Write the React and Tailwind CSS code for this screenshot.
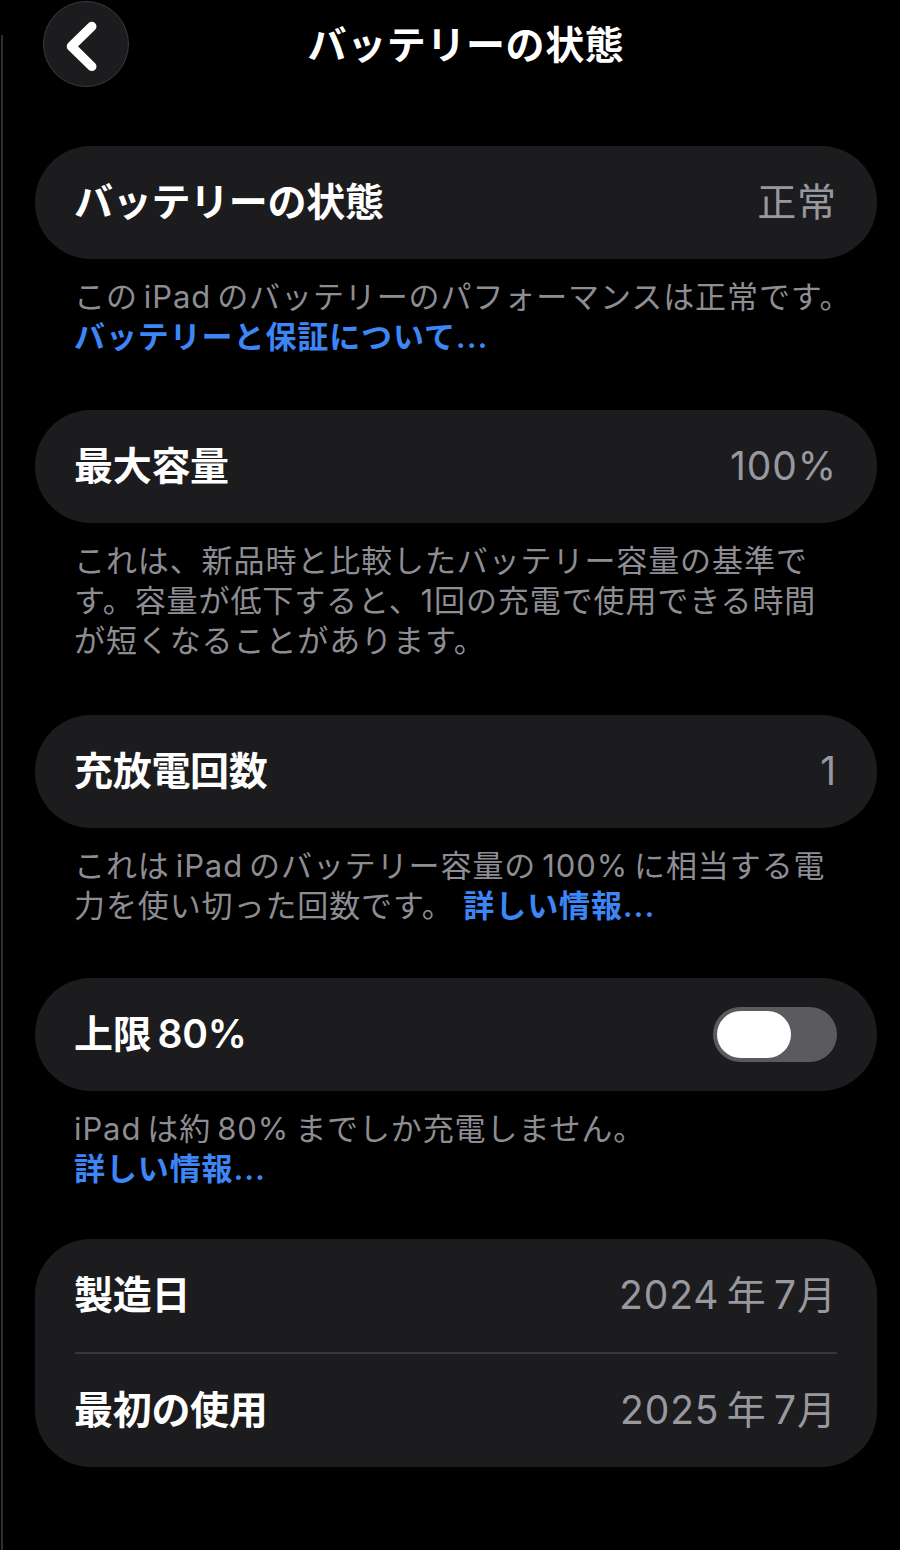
import React, { useState } from 'react';

const font = "font-['Inter','Noto_Sans_CJK_JP',sans-serif]";
const sp = '\u2006'; // narrow gap between latin and kana, like iOS

function Card({ children }) {
    return <div className="bg-[#1c1c1e] rounded-[56px]">{children}</div>;
}

function Row({ label, value, right }) {
    return (
        <div className="h-[113px] flex items-center justify-between pl-[39px] pr-[40px]">
            <span className="text-[39px] font-semibold text-white tracking-[-0.3px]">{label}</span>
            {right ? right : <span className="text-[39px] text-[#98989e] tracking-[0.9px]">{value}</span>}
        </div>
    );
}

function Footer({ children }) {
    return (
        <p className="mt-[18px] pl-[39px] text-[31px] leading-[40px] tracking-[0.9px] text-[#8d8d93] whitespace-nowrap">
            {children}
        </p>
    );
}

function Link({ children }) {
    return <span className="text-[#3d86f5] font-semibold">{children}</span>;
}

function Toggle() {
    const [on, setOn] = useState(false);
    return (
        <button
            onClick={() => setOn(!on)}
            className={`w-[124px] h-[55px] rounded-full p-[4px] flex ${on ? 'bg-[#30d158] justify-end' : 'bg-[#5b5b5f] justify-start'}`}
        >
            <span className="w-[74px] h-[47px] rounded-full bg-white block" />
        </button>
    );
}

export default function App() {
    return (
        <div className={`min-h-[1550px] bg-black text-white flex ${font}`}>
            {/* device edge */}
            <div className="w-[2px] ml-[1px] mt-[35px] bg-[#2e2e30]" />

            <div className="flex-1 pr-[23px]">
                {/* Header */}
                <div className="h-[92px] flex items-center relative">
                    <button className="ml-[40px] mt-[-4px] w-[86px] h-[86px] rounded-full bg-[#1c1c1e] border border-[#3a3a3c] flex items-center justify-center shrink-0">
                        <svg width="86" height="86" viewBox="0 0 86 86">
                            <path d="M49 25 L28 45.5 L49 66" fill="none" stroke="white" strokeWidth="9.5" strokeLinecap="round" strokeLinejoin="round" />
                        </svg>
                    </button>
                    <h1 className="absolute inset-x-0 top-[20px] text-center pl-[52px] text-[39px] leading-[50px] font-bold tracking-[0.6px]">
                        バッテリーの状態
                    </h1>
                </div>

                <div className="pl-[32px] pt-[54px]">
                    <Card>
                        <Row label="バッテリーの状態" value="正常" />
                    </Card>
                    <Footer>
                        この{sp}iPad{sp}のバッテリーのパフォーマンスは正常です。<br />
                        <Link>バッテリーと保証について...</Link>
                    </Footer>

                    <div className="mt-[53px]">
                        <Card>
                            <Row label="最大容量" value="100%" />
                        </Card>
                    </div>
                    <Footer>
                        これは、新品時と比較したバッテリー容量の基準で<br />
                        す。容量が低下すると、1回の充電で使用できる時間<br />
                        が短くなることがあります。
                    </Footer>

                    <div className="mt-[54px]">
                        <Card>
                            <Row label="充放電回数" value="1" />
                        </Card>
                    </div>
                    <Footer>
                        これは{sp}iPad{sp}のバッテリー容量の{sp}100%{sp}に相当する電<br />
                        力を使い切った回数です。 <Link>詳しい情報...</Link>
                    </Footer>

                    <div className="mt-[52px]">
                        <Card>
                            <Row label={`上限${sp}80%`} right={<Toggle />} />
                        </Card>
                    </div>
                    <Footer>
                        iPad{sp}は約{sp}80%{sp}までしか充電しません。<br />
                        <Link>詳しい情報...</Link>
                    </Footer>

                    <div className="mt-[50px]">
                        <Card>
                            <Row label="製造日" value={`2024${sp}年${sp}7月`} />
                            <div className="mx-[40px] h-[2px] bg-[#38383a]" />
                            <Row label="最初の使用" value={`2025${sp}年${sp}7月`} />
                        </Card>
                    </div>
                </div>
            </div>
        </div>
    );
}
